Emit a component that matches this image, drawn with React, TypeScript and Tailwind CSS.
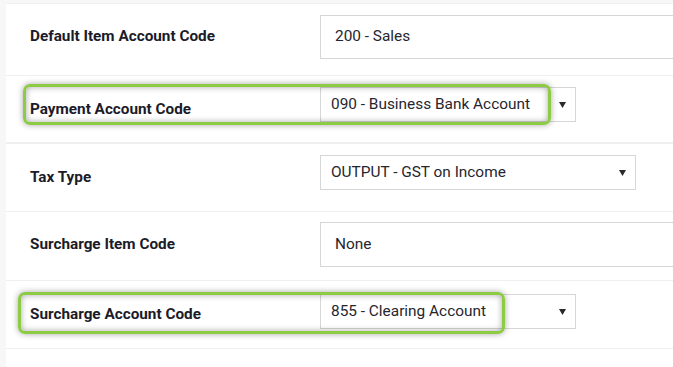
import React from "react";

type Row = {
  label: string;
  value: string;
  kind: "input" | "select";
  rowClass: string;
  controlClass: string;
  labelClass?: string;
};

const rows: Row[] = [
  {
    label: "Default Item Account Code",
    value: "200 - Sales",
    kind: "input",
    rowClass: "h-[72px] border-b",
    controlClass: "mt-[11px] h-[44px] w-[380px] pl-[14px]",
    labelClass: "-translate-y-[3px]",
  },
  {
    label: "Payment Account Code",
    value: "090 - Business Bank Account",
    kind: "select",
    rowClass: "h-[68px] border-b-2",
    controlClass: "mt-[11px] h-[35px] w-[256px] pl-[10px]",
  },
  {
    label: "Tax Type",
    value: "OUTPUT - GST on Income",
    kind: "select",
    rowClass: "h-[68px] border-b",
    controlClass: "mt-[11px] h-[35px] w-[316px] pl-[10px]",
  },
  {
    label: "Surcharge Item Code",
    value: "None",
    kind: "input",
    rowClass: "h-[69px] border-b",
    controlClass: "mt-[10px] h-[45px] w-[380px] pl-[14px]",
    labelClass: "-translate-y-[2px]",
  },
  {
    label: "Surcharge Account Code",
    value: "855 - Clearing Account",
    kind: "select",
    rowClass: "h-[68px] border-b",
    controlClass: "mt-[13px] h-[35px] w-[256px] pl-[10px]",
  },
];

const Control = (props: { row: Row }) => {
  let { row } = props;
  return (
    <div
      className={`relative flex shrink-0 items-center self-start border border-[#d6d6d6] bg-white text-[15.4px] text-[#26262e] ${row.controlClass}`}
    >
      <span>{row.value}</span>
      {row.kind === "select" ? (
        <svg
          className="absolute right-[9px] top-1/2 -translate-y-1/2"
          width="7"
          height="6"
          viewBox="0 0 7 6"
        >
          <polygon points="0,0 7,0 3.5,6" fill="#2a2a2a" />
        </svg>
      ) : null}
    </div>
  );
};

const Highlight = (props: { className: string }) => (
  <div
    className={`pointer-events-none absolute rounded-[7px] border-[3px] border-[#8ccb43] shadow-[0_0_6px_rgba(0,0,0,0.35),inset_0_0_6px_rgba(0,0,0,0.35)] ${props.className}`}
  />
);

export default function App() {
  return (
    <div className="relative h-[367px] w-[673px] overflow-hidden bg-[#f7f7f7] pl-[6px] pt-[3px] font-['Roboto',sans-serif]">
      <div className="h-full border-t border-[#f1f1f1] bg-white">
        {rows.map((r) => (
          <div
            key={r.label}
            className={`flex items-center border-[#efefef] pl-[24px] ${r.rowClass}`}
          >
            <div
              className={`w-[290px] shrink-0 text-[15.3px] font-bold text-[#1b1b29] ${r.labelClass ?? ""}`}
            >
              {r.label}
            </div>
            <Control row={r} />
          </div>
        ))}
      </div>
      <Highlight className="left-[23px] top-[84px] h-[41px] w-[528px]" />
      <Highlight className="left-[18px] top-[292px] h-[42px] w-[487px]" />
    </div>
  );
}
